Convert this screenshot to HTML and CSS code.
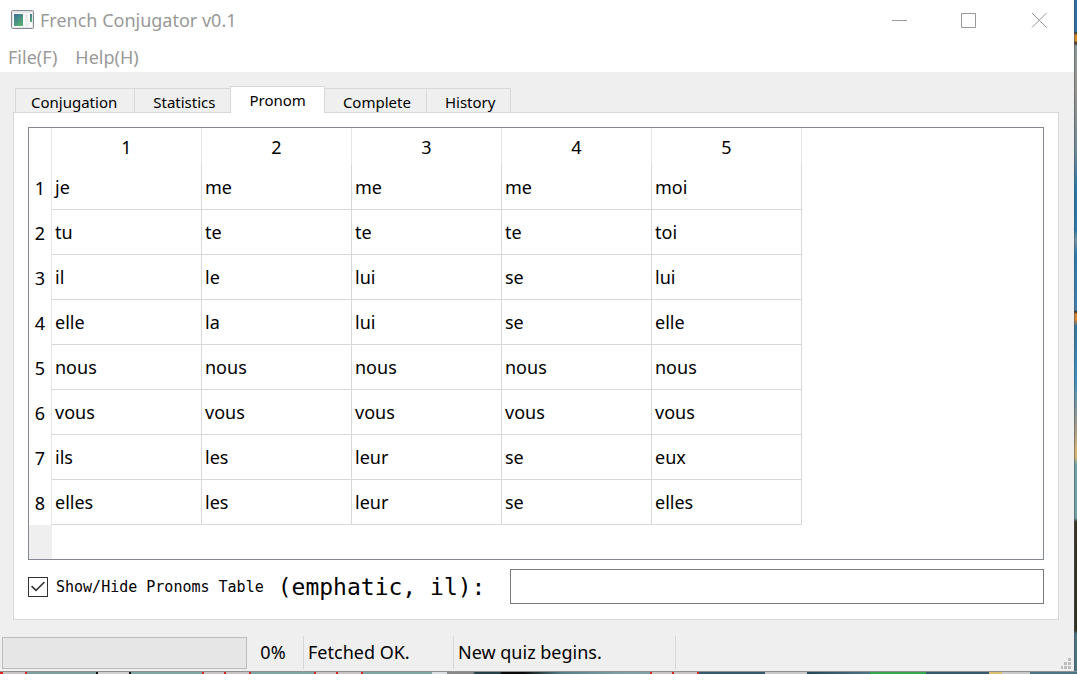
FILE: index.html
```html
<!DOCTYPE html>
<html lang="en">
<head>
<meta charset="utf-8">
<title>French Conjugator v0.1</title>
<link rel="stylesheet" href="styles.css">
</head>
<body>
<div class="desktop">
  <div class="window">
    <header class="titlebar">
      <svg class="app-icon" width="24" height="20" viewBox="0 0 24 20" aria-hidden="true">
        <defs>
          <linearGradient id="pane" x1="0" y1="0" x2="0.6" y2="1"><stop offset="0" stop-color="#3d6f9c"/><stop offset="1" stop-color="#55ad72"/></linearGradient>
        </defs>
        <rect x="0.5" y="0.5" width="22" height="18" rx="1" fill="#e3e7ea" stroke="#858a90"/>
        <rect x="2" y="3" width="19" height="14" fill="#fafafa"/>
        <rect x="3" y="4" width="9" height="12" fill="url(#pane)"/>
        <rect x="14" y="4" width="3" height="8" fill="#eceeef"/>
        <rect x="19" y="4" width="2" height="8" fill="url(#pane)"/>
        <rect x="14" y="13" width="4" height="3" fill="#eceeef"/>
      </svg>
      <h1 class="title">French Conjugator v0.1</h1>
      <div class="controls">
        <button class="control" type="button" aria-label="Minimize"><svg width="16" height="16" viewBox="0 0 16 16"><path d="M1 8.500H16"/></svg></button>
        <button class="control" type="button" aria-label="Maximize"><svg width="16" height="16" viewBox="0 0 16 16"><path d="M0.500 1.500h14v14h-14z"/></svg></button>
        <button class="control" type="button" aria-label="Close"><svg width="16" height="16" viewBox="0 0 16 16"><path d="M1 1l14.500 14.500M15.500 1L1 15.500"/></svg></button>
      </div>
    </header>
    <nav class="menubar">
      <button class="menu" type="button">File(F)</button>
      <button class="menu" type="button">Help(H)</button>
    </nav>
    <main class="content">
      <div class="tabs" role="tablist">
        <button class="tab tab-first" type="button" role="tab">Conjugation</button>
        <button class="tab" type="button" role="tab">Statistics</button>
        <button class="tab tab-active" type="button" role="tab" aria-selected="true">Pronom</button>
        <button class="tab" type="button" role="tab">Complete</button>
        <button class="tab" type="button" role="tab">History</button>
      </div>
      <section class="panel" role="tabpanel" aria-label="Pronom">
        <div class="table-view">
          <table class="pronouns">
            <thead>
              <tr><th class="corner"></th><th>1</th><th>2</th><th>3</th><th>4</th><th>5</th></tr>
            </thead>
            <tbody>
              <tr><th>1</th><td>je</td><td>me</td><td>me</td><td>me</td><td>moi</td></tr>
              <tr><th>2</th><td>tu</td><td>te</td><td>te</td><td>te</td><td>toi</td></tr>
              <tr><th>3</th><td>il</td><td>le</td><td>lui</td><td>se</td><td>lui</td></tr>
              <tr><th>4</th><td>elle</td><td>la</td><td>lui</td><td>se</td><td>elle</td></tr>
              <tr><th>5</th><td>nous</td><td>nous</td><td>nous</td><td>nous</td><td>nous</td></tr>
              <tr><th>6</th><td>vous</td><td>vous</td><td>vous</td><td>vous</td><td>vous</td></tr>
              <tr><th>7</th><td>ils</td><td>les</td><td>leur</td><td>se</td><td>eux</td></tr>
              <tr><th>8</th><td>elles</td><td>les</td><td>leur</td><td>se</td><td>elles</td></tr>
            </tbody>
          </table>
          <div class="header-rest"></div>
        </div>
        <div class="quiz">
          <input class="check" type="checkbox" id="toggle" checked>
          <label class="check-label" for="toggle">Show/Hide Pronoms Table</label>
          <label class="prompt" for="answer">(emphatic, il):</label>
          <input class="answer" type="text" id="answer">
        </div>
      </section>
    </main>
    <footer class="statusbar">
      <progress class="progress" id="progress" value="0" max="100"></progress>
      <label class="percent" for="progress">0%</label>
      <span class="status">Fetched OK.</span>
      <span class="status status-wide">New quiz begins.</span>
      <svg class="grip" width="10" height="11" viewBox="0 0 10 11" fill="#bdbdbd" aria-hidden="true"><path d="M7 0h3v3H7zM3 4h3v3H3zM7 4h3v3H7zM0 8h2v3H0zM3 8h3v3H3zM7 8h3v3H7z"/></svg>
    </footer>
  </div>
  <div class="backdrop-right"></div>
  <div class="backdrop-bottom"></div>
</div>
</body>
</html>
```
FILE: styles.css
```css
* { box-sizing: border-box; }
body {
  margin: 0;
  font-family: "Noto Sans", "Open Sans", sans-serif;
  font-size: 18px;
  line-height: 24px;
  color: #000;
}
button { font: inherit; color: inherit; background: none; border: 0; padding: 0; }
.desktop {
  display: grid;
  grid-template-columns: 1fr 3px;
  grid-template-rows: 1fr 3px;
  min-height: 100vh;
}
.window { display: flex; flex-direction: column; background: #efefef; }
.backdrop-right {
  border-left: 1px solid rgba(70, 80, 90, 0.5);
  background: linear-gradient(#2b6da3 0 32px, #3a2a1c 33px, #d8862c 35px 41px, #3a2a1c 43px, #8c9a9a 46px, #99938a 90px, #6f8a99 150px, #2876a6 190px, #2a78ac 230px, #7596a8 240px, #2a78ac 255px, #3f82b0 310px, #3a2a1c 312px, #d8862c 314px 320px, #34759f 326px, #3f8fbe 380px, #ad9c84 430px, #d5b56e 450px 458px, #6fa2a6 464px, #6fa2a6 518px, #3a3222 522px, #33301e 630px, #4a7482 634px);
}
.backdrop-bottom {
  grid-column: 1 / -1;
  border-top: 1px solid #8d9393;
  background: linear-gradient(90deg, #d22 0 3px, #c9c4c4 3px 25px, #d22 25px 27px, #7fa0a0 27px 96px, #111 96px 98px, #d0d0d0 98px 129px, #111 129px 131px, #7fa5a5 131px 202px, #d22 202px 204px, #c9c4c4 204px 224px, #d22 224px 226px, #c9c4c4 226px 249px, #d22 249px 251px, #7fa5a5 251px 314px, #d22 314px 316px, #c9c4c4 316px 336px, #d22 336px 338px, #c9c4c4 338px 361px, #d22 361px 363px, #7fa5a5 363px 432px, #dde1e7 432px 447px, #888 447px 473px, #253f48 475px 500px, #080808 502px 523px, #527d88 560px, #7fa0a5 620px, #7fa0a5 650px, #d22 650px 652px, #c9c4c4 652px 672px, #d22 672px 674px, #c9c4c4 674px 697px, #d22 697px 699px, #36596d 699px 765px, #c9c9c9 765px 807px, #264858 807px, #4b7485 870px, #36a64c 870px 926px, #36596d 926px 989px, #dbc070 989px 1002px, #c9c9c9 1002px 1030px, #4b7485 1030px);
}

.titlebar { display: flex; align-items: center; height: 40px; padding-left: 11px; gap: 5px; background: #fff; color: #999; }
.title { margin: 0; flex: 1; font-size: 18px; font-weight: 400; }
.controls { display: flex; }
.control { display: flex; align-items: center; justify-content: center; width: 70px; height: 38px; }
.control svg { fill: none; stroke: #999; }
.menubar { display: flex; gap: 18px; height: 32px; padding: 5px 8px 0; background: #fff; color: #999; align-items: flex-start; }

.content { flex: 1; display: flex; flex-direction: column; padding: 14px 15px 16px 13px; }
.tabs { display: flex; align-items: flex-end; padding-left: 2px; font-size: 15px; }
.tab { height: 24px; padding: 3px 15px 0 18px; border: 1px solid #d9d9d9; border-width: 1px 1px 0 0; line-height: 20px; }
.tab-first { padding-left: 15px; padding-right: 17px; border-left-width: 1px; }
.tab-active { height: 27px; padding: 0 18px; margin-left: -1px; margin-bottom: -1px; border-left-width: 1px; background: #fff; z-index: 1; }
.panel { flex: 1; display: flex; flex-direction: column; gap: 9px; padding: 14px 14px 15px; border: 1px solid #d9d9d9; background: #fff; }

.table-view { flex: 1; display: flex; flex-direction: column; border: 1px solid #828790; }
.pronouns { table-layout: fixed; width: 773px; border-collapse: separate; border-spacing: 0; }
.pronouns th, .pronouns td { height: 45px; padding: 0 3px; border-right: 1px solid #d8d8d8; border-bottom: 1px solid #d8d8d8; text-align: left; font-weight: 400; }
.pronouns th { padding: 0; text-align: center; border-color: #e5e5e5; border-bottom: 0; }
.pronouns thead th { height: 37px; }
.pronouns .corner { width: 23px; }
.header-rest { flex: 1; width: 23px; background: #efefef; }

.quiz { display: flex; align-items: center; font-family: "DejaVu Sans Mono", monospace; }
.check { appearance: none; display: grid; place-items: center; width: 20px; height: 20px; margin: 0 8px 0 0; border: 1px solid #333; background: #fff; }
.check:checked::before { content: ""; width: 14px; height: 10px; background: #333; clip-path: polygon(0 52%, 8% 40%, 36% 78%, 92% 0, 100% 10%, 36% 100%); }
.check-label { font-size: 15px; }
.prompt { margin-left: 14px; font-size: 23px; }
.answer { flex: 1; min-width: 0; height: 35px; margin-left: 25px; padding: 0 6px; border: 1px solid #7a7a7a; background: #fff; font: inherit; }

.statusbar { display: flex; align-items: center; height: 35px; padding: 0 3px 2px 2px; }
.progress { appearance: none; width: 245px; height: 32px; border: 1px solid #bcbcbc; background: #e6e6e6; }
.progress::-webkit-progress-bar { background: #e6e6e6; }
.progress::-webkit-progress-value { background: #06b025; }
.percent { width: 57px; text-align: center; padding-right: 4px; border-right: 1px solid #d7d7d7; line-height: 33px; }
.status { width: 150px; padding-left: 4px; border-right: 1px solid #d7d7d7; line-height: 33px; }
.status-wide { width: 222px; }
.grip { margin-left: auto; align-self: flex-end; }
```
